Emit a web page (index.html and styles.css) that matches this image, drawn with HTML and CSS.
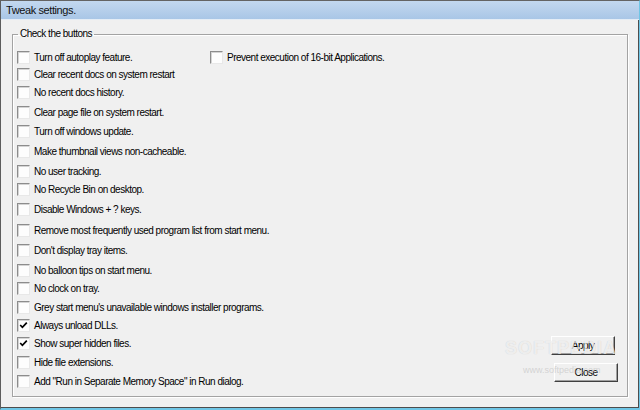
FILE: index.html
```html
<!DOCTYPE html>
<html>
<head>
  <meta charset="UTF-8">
  <title>Tweak settings.</title>
  <link rel="stylesheet" href="styles.css">
</head>
<body>
  <div class="window">
    <div class="title_bar">Tweak settings.</div>
    <div class="client">
      <fieldset class="group">
        <legend class="group_label">Check the buttons</legend>
        <div class="group_body">
          <div class="column_left">
            <label class="row first"><span class="box"></span>Turn off autoplay feature.</label>
            <label class="row"><span class="box"></span>Clear recent docs on system restart</label>
            <label class="row"><span class="box"></span>No recent docs history.</label>
            <label class="row loose"><span class="box"></span>Clear page file on system restart.</label>
            <label class="row mid"><span class="box"></span>Turn off windows update.</label>
            <label class="row loose"><span class="box"></span>Make thumbnail views non-cacheable.</label>
            <label class="row loose"><span class="box"></span>No user tracking.</label>
            <label class="row"><span class="box"></span>No Recycle Bin on desktop.</label>
            <label class="row loose"><span class="box"></span>Disable Windows + ? keys.</label>
            <label class="row wide"><span class="box"></span>Remove most frequently used program list from start menu.</label>
            <label class="row loose"><span class="box"></span>Don't display tray items.</label>
            <label class="row loose"><span class="box"></span>No balloon tips on start menu.</label>
            <label class="row"><span class="box"></span>No clock on tray.</label>
            <label class="row mid"><span class="box"></span>Grey start menu's unavailable windows installer programs.</label>
            <label class="row"><span class="box checked"><svg viewBox="0 0 11 11"><polyline points="2.2,5 4.4,7.3 8.8,2.6"/></svg></span>Always unload DLLs.</label>
            <label class="row"><span class="box checked"><svg viewBox="0 0 11 11"><polyline points="2.2,5 4.4,7.3 8.8,2.6"/></svg></span>Show super hidden files.</label>
            <label class="row mid"><span class="box"></span>Hide file extensions.</label>
            <label class="row mid"><span class="box"></span>Add "Run in Separate Memory Space" in Run dialog.</label>
          </div>
          <div class="column_right">
            <label class="row first"><span class="box"></span>Prevent execution of 16-bit Applications.</label>
            <div class="buttons">
              <button class="button apply">Apply</button>
              <button class="button">Close</button>
            </div>
          </div>
        </div>
      </fieldset>
      <div class="mark">SOFTPEDIA<span class="mark_url">www.softpedia.com</span></div>
    </div>
  </div>
</body>
</html>
```

FILE: styles.css
```css
body {
  margin: 0;
  font-family: "Liberation Sans", Arial, sans-serif;
  font-size: 10px;
  letter-spacing: -0.5px;
  color: #000;
}
.window {
  position: relative;
  width: 640px;
  height: 410px;
  box-sizing: border-box;
  background: #f0f0f0;
  border-left: 1px solid #5c5c5c;
  border-top: 1px solid #646464;
  border-right: 1px solid #6fc6e6;
  border-bottom: 2px solid #6fc6e6;
  display: flex;
  flex-direction: column;
}
.title_bar {
  height: 19px;
  line-height: 19px;
  padding-left: 5px;
  font-size: 11px;
  letter-spacing: -0.4px;
  color: #111;
  background: linear-gradient(#c3d8ef, #a9c6e6);
  border-bottom: 1px solid #e4ecf5;
  box-sizing: border-box;
}
.client {
  flex: 1;
  display: flex;
  flex-direction: column;
  border-right: 1px solid #4d4d4d;
  border-bottom: 1px solid #4d4d4d;
}
.group {
  margin: 8px 0 0 11px;
  width: 616px;
  padding: 0;
  box-sizing: border-box;
  border: 1px solid #a3a3a3;
  box-shadow: inset 1px 1px #fff, 1px 1px #fff;
  min-width: 0;
}
.group_label {
  margin-left: 5px;
  padding: 0 2px;
  line-height: 12px;
}
.group_body {
  display: flex;
  padding: 9px 9px 6px 4px;
}
.column_left {
  width: 193px;
  flex-shrink: 0;
  display: flex;
  flex-direction: column;
  white-space: nowrap;
}
.column_right {
  flex: 1;
  display: flex;
  flex-direction: column;
  white-space: nowrap;
}
.row {
  height: 18px;
  display: flex;
  align-items: center;
}
.row.first {
  height: 16px;
}
.row.mid {
  margin-top: 1px;
}
.row.loose {
  margin-top: 2px;
}
.row.wide {
  margin-top: 3px;
}
.box {
  width: 13px;
  height: 13px;
  box-sizing: border-box;
  margin-right: 4px;
  flex-shrink: 0;
  background: #fdfdfd;
  border: 1px solid;
  border-color: #8c8c8c #e8e8e8 #e8e8e8 #8c8c8c;
  box-shadow: inset 1px 1px #d4d4d4;
}
.box svg {
  display: block;
  width: 11px;
  height: 11px;
}
.box polyline {
  fill: none;
  stroke: #000;
  stroke-width: 1.7;
}
.buttons {
  margin-top: auto;
  margin-bottom: 8px;
  display: flex;
  flex-direction: column;
  align-items: flex-end;
  gap: 8px;
}
.button {
  width: 64px;
  height: 19px;
  padding: 0;
  font: inherit;
  letter-spacing: inherit;
  color: #000;
  background: #f0f0f0;
  border: 1px solid;
  border-color: #fff #404040 #404040 #fff;
  box-shadow: inset -1px -1px #a0a0a0;
}
.button.apply {
  margin-right: 3px;
}
.mark {
  position: absolute;
  left: 504px;
  top: 337px;
  font-family: "Liberation Sans", Arial, sans-serif;
  font-weight: bold;
  font-size: 18px;
  letter-spacing: 1px;
  color: rgba(255, 255, 255, 0.7);
  text-shadow: 0 0 1px rgba(0, 0, 0, 0.18);
  pointer-events: none;
}
.mark_url {
  display: block;
  margin: 6px 0 0 18px;
  font-size: 9px;
  font-weight: normal;
  letter-spacing: 0;
  color: rgba(190, 190, 190, 0.6);
  text-shadow: none;
}
```
